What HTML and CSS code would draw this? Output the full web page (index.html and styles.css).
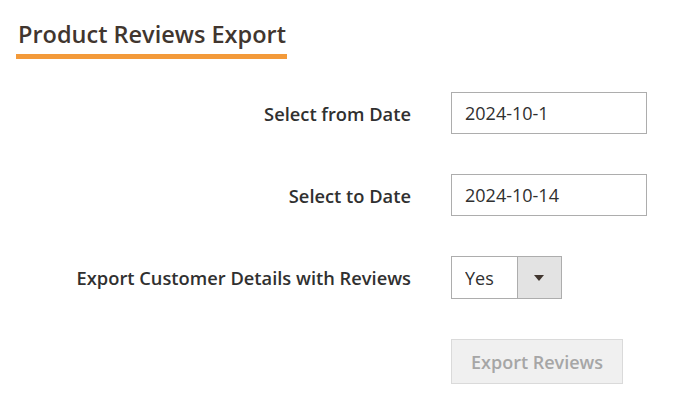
FILE: index.html
```html
<!DOCTYPE html>
<html lang="en">
<head>
  <meta charset="UTF-8" />
  <title>Product Reviews Export</title>
  <link rel="stylesheet" href="styles.css">
</head>
<body>

  <div class="page-title">
    <h1>Product Reviews Export</h1>
  </div>

  <form class="export-form">
    <label class="field-label" for="fromDate">Select from Date</label>
    <div class="field-control"><input id="fromDate" class="input-text" type="text" value="2024-10-1"></div>

    <label class="field-label" for="toDate">Select to Date</label>
    <div class="field-control"><input id="toDate" class="input-text" type="text" value="2024-10-14"></div>

    <label class="field-label" for="withCustomer">Export Customer Details with Reviews</label>
    <div class="field-control">
      <div class="select-wrap">
        <select id="withCustomer">
          <option>Yes</option>
          <option>No</option>
        </select>
        <span class="select-arrow"></span>
      </div>
    </div>

    <div></div>
    <div class="field-control">
      <button type="button" class="action-export" disabled>Export Reviews</button>
    </div>
  </form>

</body>
</html>
```

FILE: styles.css
```css
body {
  margin: 0;
  font-family: "Open Sans", "Liberation Sans", sans-serif;
  color: #303030;
  background: #fff;
}

.page-title {
  padding: 18px 0 0 16px;
}

.page-title h1 {
  display: inline-block;
  margin: 0;
  padding: 0 1px 4px 2px;
  font-size: 23.5px;
  font-weight: 600;
  line-height: 32px;
  color: #41362f;
  border-bottom: 5px solid #f39a3a;
}

.export-form {
  display: grid;
  grid-template-columns: 411px auto;
  column-gap: 40px;
  row-gap: 40px;
  margin-top: 33px;
}

.field-label {
  display: flex;
  align-items: center;
  justify-content: flex-end;
  font-size: 18.3px;
  font-weight: 600;
  color: #303030;
}

.field-control {
  display: flex;
  align-items: center;
}

.input-text {
  width: 196px;
  height: 42px;
  box-sizing: border-box;
  padding: 0 13px;
  border: 1px solid #adadad;
  font-family: inherit;
  font-size: 18px;
  color: #303030;
}

.select-wrap {
  position: relative;
  width: 111px;
  height: 43px;
}

.select-wrap select {
  appearance: none;
  width: 100%;
  height: 100%;
  box-sizing: border-box;
  padding: 0 13px;
  border: 1px solid #adadad;
  background: #fff;
  font-family: inherit;
  font-size: 18px;
  color: #303030;
}

.select-arrow {
  position: absolute;
  top: 1px;
  right: 1px;
  bottom: 1px;
  width: 43px;
  border-left: 1px solid #adadad;
  background: #e3e3e3;
  pointer-events: none;
}

.select-arrow::after {
  content: "";
  position: absolute;
  left: 16px;
  top: 18px;
  border-left: 5px solid transparent;
  border-right: 5px solid transparent;
  border-top: 6px solid #41362f;
}

.action-export {
  height: 45px;
  padding: 0 19px;
  border: 1px solid #dadada;
  background: #f0f0f0;
  color: #a6a6a6;
  font-family: inherit;
  font-size: 18px;
  font-weight: 600;
}
```
